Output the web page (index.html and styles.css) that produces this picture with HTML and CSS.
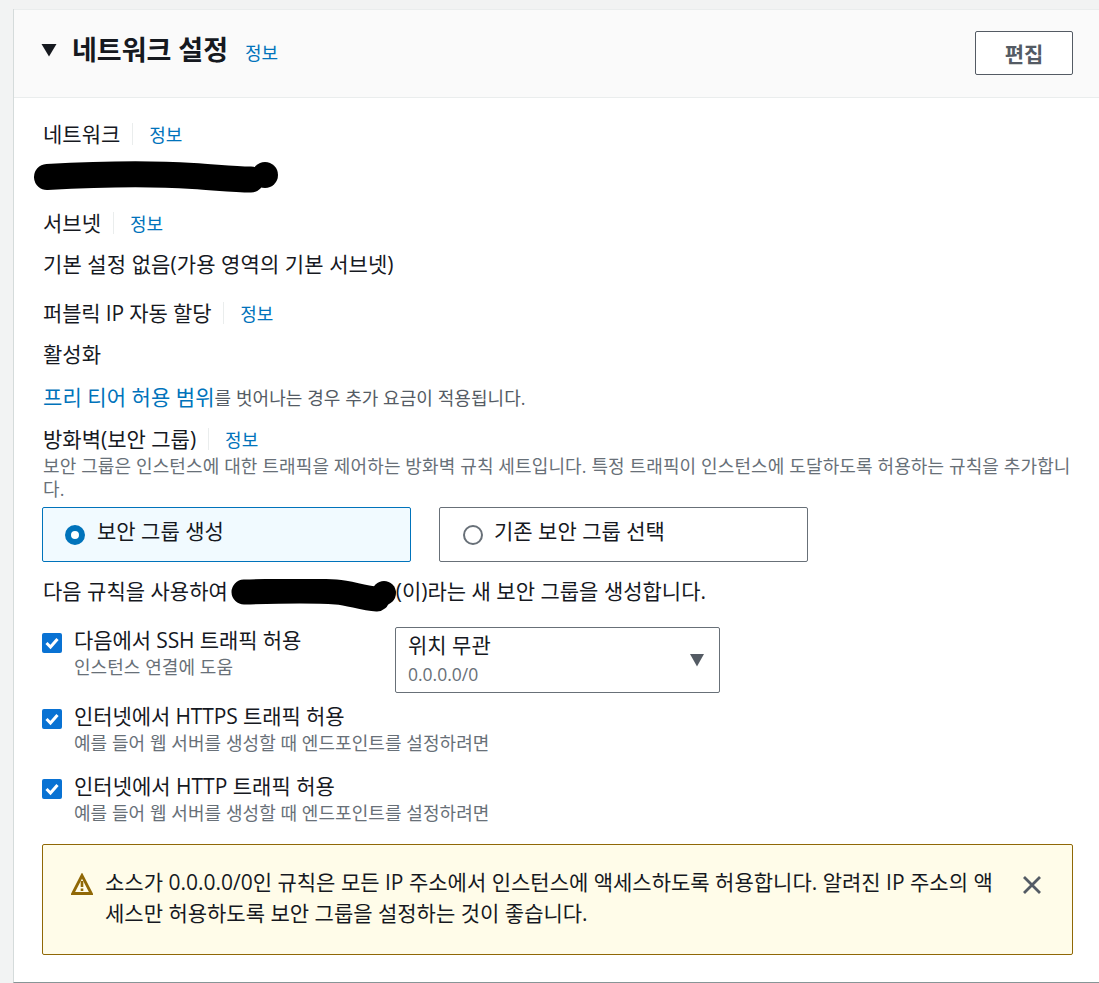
FILE: index.html
```html
<!DOCTYPE html>
<html lang="ko">
<head>
<meta charset="utf-8">
<title>네트워크 설정</title>
<link rel="stylesheet" href="styles.css">
</head>
<body>
<section class="card">
  <header class="card-header">
    <svg class="caret" viewBox="0 0 16 14"><path d="M0.500 1h15L8 13.500z"/></svg>
    <h2 class="title">네트워크 설정</h2>
    <a class="info info-title">정보</a>
    <button class="edit">편집</button>
  </header>
  <div class="card-body">
    <div class="label-row row-network"><span class="label">네트워크</span><a class="info">정보</a></div>
    <svg class="scribble-a" viewBox="0 0 246 32"><path d="M14 16C60 13.500 120 12.500 160 15C185 16.500 200 18.500 218 18.500" fill="none" stroke="#000" stroke-width="26" stroke-linecap="round"/><circle cx="232" cy="14" r="13"/></svg>
    <div class="label-row row-subnet"><span class="label">서브넷</span><a class="info">정보</a></div>
    <p class="value row-subnet-value">기본 설정 없음(가용 영역의 기본 서브넷)</p>
    <div class="label-row row-ip"><span class="label label-ip">퍼블릭 IP 자동 할당</span><a class="info">정보</a></div>
    <p class="value row-enabled">활성화</p>
    <p class="free-tier"><a class="free-link">프리 티어 허용 범위</a>를 벗어나는 경우 추가 요금이 적용됩니다.</p>
    <div class="label-row row-firewall"><span class="label">방화벽(보안 그룹)</span><a class="info">정보</a></div>
    <p class="description">보안 그룹은 인스턴스에 대한 트래픽을 제어하는 방화벽 규칙 세트입니다. 특정 트래픽이 인스턴스에 도달하도록 허용하는 규칙을 추가합니다.</p>
    <div class="tiles">
      <div class="tile tile-on"><span class="radio radio-on"></span><span class="tile-text">보안 그룹 생성</span></div>
      <div class="tile"><span class="radio radio-off"></span><span class="tile-text">기존 보안 그룹 선택</span></div>
    </div>
    <p class="rule-line">다음 규칙을 사용하여<svg class="scribble-b" viewBox="0 0 166 34"><path d="M13 13C50 12 90 12 105 13C120 14 130 19 146 20" fill="none" stroke="#000" stroke-width="25" stroke-linecap="round"/><circle cx="153" cy="14" r="12"/></svg>(이)라는 새 보안 그룹을 생성합니다.</p>
    <div class="check-first">
      <div class="check">
        <svg class="box" viewBox="0 0 20 20"><rect width="20" height="20" rx="2" fill="#0972d3"/><path d="M4.500 10l4 4 7-8" fill="none" stroke="#fff" stroke-width="3"/></svg>
        <div><div class="check-title tight">다음에서 SSH 트래픽 허용</div><div class="check-sub">인스턴스 연결에 도움</div></div>
      </div>
      <div class="select">
        <div><div class="select-title">위치 무관</div><div class="select-sub">0.0.0.0/0</div></div>
        <svg class="select-caret" viewBox="0 0 16 14"><path d="M1 1h14L8 13.500z"/></svg>
      </div>
    </div>
    <div class="check check-https">
      <svg class="box" viewBox="0 0 20 20"><rect width="20" height="20" rx="2" fill="#0972d3"/><path d="M4.500 10l4 4 7-8" fill="none" stroke="#fff" stroke-width="3"/></svg>
      <div><div class="check-title tight">인터넷에서 HTTPS 트래픽 허용</div><div class="check-sub">예를 들어 웹 서버를 생성할 때 엔드포인트를 설정하려면</div></div>
    </div>
    <div class="check check-http">
      <svg class="box" viewBox="0 0 20 20"><rect width="20" height="20" rx="2" fill="#0972d3"/><path d="M4.500 10l4 4 7-8" fill="none" stroke="#fff" stroke-width="3"/></svg>
      <div><div class="check-title">인터넷에서 HTTP 트래픽 허용</div><div class="check-sub">예를 들어 웹 서버를 생성할 때 엔드포인트를 설정하려면</div></div>
    </div>
    <div class="alert">
      <svg class="warn" viewBox="0 0 22 22"><path d="M11 2.500L1.700 20.500h18.600z" fill="none" stroke="#906806" stroke-width="2.800" stroke-linejoin="miter"/><path d="M11 8v6M11 15.500v2.500" stroke="#906806" stroke-width="2.600"/></svg>
      <p class="alert-text">소스가 0.0.0.0/0인 규칙은 모든 IP 주소에서 인스턴스에 액세스하도록 허용합니다. 알려진 IP 주소의 액세스만 허용하도록 보안 그룹을 설정하는 것이 좋습니다.</p>
      <svg class="close" viewBox="0 0 20 20"><path d="M2 2l16 16M18 2L2 18" stroke="#545b64" stroke-width="2.800" fill="none"/></svg>
    </div>
  </div>
</section>
</body>
</html>
```
FILE: styles.css
```css
* { box-sizing: border-box; }
html, body { margin: 0; padding: 0; }
body {
  height: 983px;
  overflow: hidden;
  background: #f2f3f3;
  color: #16191f;
  font-family: "Open Sans", "Noto Sans CJK KR", sans-serif;
  font-size: 21px;
  padding: 9px 0 0 13px;
}
p { margin: 0; }
.card {
  height: 974px;
  background: #fff;
  border-left: 1px solid #d5dbdb;
  border-bottom: 1px solid #879596;
}
.card-header {
  height: 89px;
  background: #fafafa;
  border-top: 1px solid #eaeded;
  border-bottom: 1px solid #eaeded;
  display: flex;
  align-items: center;
  padding: 0 26px 8px 27px;
}
.caret { width: 16px; height: 14px; fill: #16191f; }
.title { margin: 0 0 0 15px; font-size: 27px; font-weight: 700; line-height: 32px; }
.info { color: #0073bb; font-size: 18px; }
.info-title { margin: 4px 0 0 17px; }
.edit {
  margin: 6px 0 0 auto;
  width: 98px;
  height: 44px;
  border: 1px solid #545b64;
  border-radius: 2px;
  background: #fff;
  color: #545b64;
  padding: 0;
  font: 700 21px "Open Sans", "Noto Sans CJK KR", sans-serif;
}
.card-body { padding: 0 26px 0 29px; }
.label-row { display: flex; align-items: center; height: 24px; }
.label { padding-right: 12px; border-right: 1px solid #eaeded; line-height: 22px; }
.label-ip { letter-spacing: -0.15px; }
.label-row .info { margin-left: 16px; }
.row-network { margin-top: 24px; }
.scribble-a { display: block; width: 246px; height: 32px; margin: 15px 0 0 -10px; }
.row-subnet { margin-top: 18px; }
.value { line-height: 26px; }
.row-subnet-value { margin-top: 16px; letter-spacing: 0.08px; }
.row-ip { margin-top: 24px; }
.row-enabled { margin-top: 16px; }
.free-tier { margin-top: 17px; font-size: 18px; line-height: 26px; color: #545b64; letter-spacing: 0.06px; }
.free-link { color: #0073bb; font-size: 21px; }
.row-firewall { margin-top: 16px; }
.description { margin-top: 4px; font-size: 18px; line-height: 23px; color: #687078; letter-spacing: 0.12px; }
.tiles { display: flex; gap: 28px; margin: 6px 0 0 -1px; }
.tile {
  width: 369px;
  height: 55px;
  border: 1px solid #687078;
  border-radius: 2px;
  display: flex;
  padding: 10px 0 0 22px;
}
.tile-on { background: #f1faff; border-color: #0073bb; }
.radio {
  width: 20px;
  height: 20px;
  margin-top: 7px;
  border: 2px solid #687078;
  border-radius: 50%;
  background: #fff;
}
.radio-on { border: 6px solid #0073bb; }
.radio-off { margin-left: 1px; }
.tile-text { margin-left: 12px; line-height: 26px; }
.radio-off + .tile-text { margin-left: 11px; }
.rule-line { margin-top: 16px; line-height: 26px; }
.scribble-b { width: 166px; height: 34px; vertical-align: -4px; margin: -10px -1px -10px 3px; }
.check-first { display: flex; margin-top: 23px; align-items: flex-start; }
.check { display: flex; width: 353px; margin-left: -1px; }
.box { width: 20px; height: 20px; flex: none; margin: 6px 12px 0 0; }
.check-title { line-height: 26px; }
.tight { letter-spacing: -0.1px; }
.check-sub { font-size: 18px; line-height: 21px; color: #687078; margin-top: 4px; white-space: nowrap; letter-spacing: 0.06px; }
.select {
  width: 325px;
  height: 66px;
  border: 1px solid #687078;
  border-radius: 2px;
  display: flex;
  align-items: center;
  justify-content: space-between;
  padding: 0 14px 3px 12px;
}
.select-title { line-height: 26px; }
.select-sub { font-size: 17.5px; line-height: 24px; margin-top: 4px; color: #687078; }
.select-caret { width: 16px; height: 14px; fill: #545b64; margin-top: 3px; }
.check-https { margin-top: 10px; }
.check-http { margin-top: 19px; }
.alert {
  margin: 20px 0 0 -1px;
  width: 1031px;
  height: 111px;
  background: #fffce9;
  border: 1px solid #906806;
  border-radius: 2px;
  display: flex;
  align-items: flex-start;
  padding: 22px 0 0 28px;
}
.warn { width: 22px; height: 22px; flex: none; margin: 6px 12px 0 0; }
.alert-text { width: 896px; flex: none; line-height: 31px; }
.close { width: 20px; height: 20px; flex: none; margin: 8px 0 0 21px; }
```
